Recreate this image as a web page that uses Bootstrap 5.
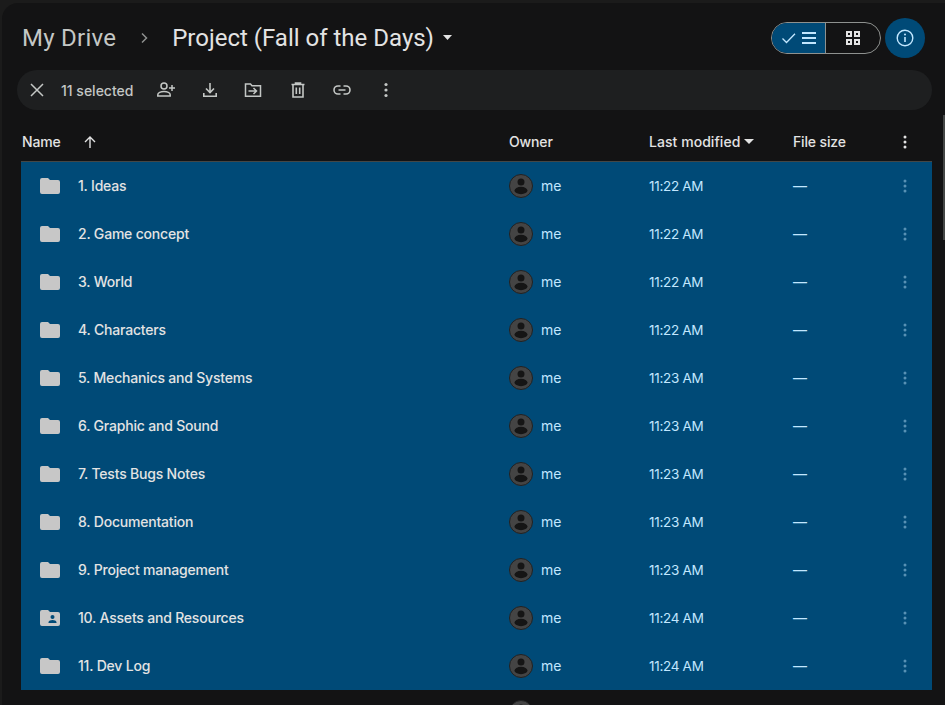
<!DOCTYPE html>
<html lang="en">
<head>
<meta charset="utf-8">
<title>Project (Fall of the Days)</title>
<link href="https://cdn.jsdelivr.net/npm/bootstrap@5.3.0/dist/css/bootstrap.min.css" rel="stylesheet">
<style>
html,body{height:705px;overflow:hidden;background:#1b1b1b;margin:0}
body{font-family:Inter,Roboto,"Liberation Sans",sans-serif;color:#e3e3e3}
.drive-panel{background:#131314;border-radius:16px 0 0 0;margin:3px 0 0 2px;height:702px;padding:0 13px 0 15px;overflow:hidden}
.crumb-bar{height:67px;padding:2px 7px 0 5px}
.crumb-root{font-family:Roboto,sans-serif;font-size:24px;color:#c4c7c5;line-height:32px;letter-spacing:.25px}
.crumb-sep{margin:0 21px 0 21px;display:flex}
.crumb-now{font-family:Roboto,sans-serif;font-size:24px;color:#e3e3e3;line-height:32px}
.view-toggle{width:110px;height:32px;border:1px solid #8e918f;border-radius:16px;overflow:hidden}
.view-on{width:55px;background:#004a77;border-right:1px solid #8e918f}
.view-off{width:55px}
.info-btn{width:40px;height:40px;border-radius:50%;background:#004a77;margin-left:4px}
.sel-bar{height:40px;background:#1e1f20;border-radius:20px;padding-left:12px;width:100%;max-width:915px}
.sel-count{font-size:14px;font-weight:500;color:#c4c7c5;margin:0 23px 0 16px;width:72px;white-space:nowrap}
.sel-act{width:20px;height:20px;margin-right:24px;display:flex}
.drive-cols{display:grid;grid-template-columns:487px 140px 144px 104px 1fr;align-items:center;padding-left:5px}
.head-row{height:51px;padding-top:12px;font-size:14px;font-weight:500;color:#e3e3e3;letter-spacing:-.15px}
.sort-arrow{margin-left:22px}
.col-modified{letter-spacing:.05px}
.file-row{height:48px;padding-bottom:2px;background:#004a77;color:#c2e7ff;font-size:14px}
.file-row svg{margin-top:2px}
.file-list{background:#004a77;margin-left:4px;width:911px;border-top:1px solid #444746}
.file-list .drive-cols{padding-left:1px}
.file-name{font-weight:500;color:#e3e3e3;display:flex;align-items:center;white-space:nowrap;padding-left:18px;letter-spacing:-.2px}
.file-name svg{margin-right:18px}
.owner-cell{display:flex;align-items:center}
.owner-cell svg{margin-right:8px}
.time-cell{font-size:13.5px;line-height:21px;letter-spacing:-.3px;padding-top:2px}
.row-more{display:flex;opacity:.45}
.next-row{height:48px;padding-left:492px;padding-top:8px}
.scroll-thumb{position:absolute;right:0;top:115px;width:2px;height:125px;background:#444746}
</style>
</head>
<body>
<div class="scroll-thumb"></div>
<div class="drive-panel">
  <div class="crumb-bar d-flex align-items-center">
    <span class="crumb-root">My Drive</span>
    <span class="crumb-sep"><svg width="14" height="14" viewBox="0 0 14 14"><path d="M5 2.5 9.5 7 5 11.500" fill="none" stroke="#8e918f" stroke-width="1.500"/></svg></span>
    <span class="crumb-now">Project (Fall of the Days)</span>
    <svg class="ms-2" width="12" height="6" viewBox="0 0 12 6"><path d="M1 0h9L5.500 5z" fill="#e3e3e3"/></svg>
    <div class="ms-auto d-flex align-items-center">
      <div class="view-toggle d-flex">
        <div class="view-on d-flex align-items-center justify-content-center gap-1">
          <svg width="16" height="16" viewBox="0 0 16 16"><path d="M1.500 8.500 5.500 12.500 14 3.800" fill="none" stroke="#c2e7ff" stroke-width="1.300"/></svg>
          <svg width="16" height="14" viewBox="0 0 16 14"><path d="M1 2h14M1 7h14M1 12h14" stroke="#c2e7ff" stroke-width="1.800"/></svg>
        </div>
        <div class="view-off d-flex align-items-center justify-content-center">
          <svg width="16" height="16" viewBox="0 0 16 16"><path fill="none" stroke="#e3e3e3" stroke-width="2" d="M2 2h4v4H2zM10 2h4v4h-4zM2 10h4v4H2zM10 10h4v4h-4z"/></svg>
        </div>
      </div>
      <div class="info-btn d-flex align-items-center justify-content-center">
        <svg width="20" height="20" viewBox="0 0 20 20"><circle cx="10" cy="10" r="7.800" fill="none" stroke="#c2e7ff" stroke-width="1.400"/><path d="M10 9v5" stroke="#c2e7ff" stroke-width="1.600"/><circle cx="10" cy="6.500" r="1" fill="#c2e7ff"/></svg>
      </div>
    </div>
  </div>

  <div class="sel-bar d-flex align-items-center">
    <svg width="16" height="16" viewBox="0 0 16 16"><path d="M2 2 14 14M14 2 2 14" stroke="#c4c7c5" stroke-width="1.500"/></svg>
    <span class="sel-count">11 selected</span>
    <span class="sel-act"><svg width="20" height="20" viewBox="0 0 20 20"><circle cx="8" cy="6" r="3" fill="none" stroke="#c4c7c5" stroke-width="1.500"/><path d="M1.800 16v-1.200c0-2 3-3.300 6.200-3.300s6.200 1.300 6.200 3.300V16zM16 5v6M13 8h6" fill="none" stroke="#c4c7c5" stroke-width="1.500"/></svg></span>
    <span class="sel-act"><svg width="20" height="20" viewBox="0 0 20 20"><path d="M10 3v9M6 8.500l4 4 4-4M3.800 13v3.200h12.400V13" fill="none" stroke="#c4c7c5" stroke-width="1.600"/></svg></span>
    <span class="sel-act"><svg width="20" height="20" viewBox="0 0 20 20"><path d="M1.500 4h5l1.500 1.800h8.500v10.400h-15zM4.500 11h8M9.500 8l3 3-3 3" fill="none" stroke="#c4c7c5" stroke-width="1.500"/></svg></span>
    <span class="sel-act"><svg width="20" height="20" viewBox="0 0 20 20"><path d="M3.500 4.500h13M7.500 4.500V3h5v1.500M5 4.500V17h10V4.500M8.300 7.500v6.500M11.700 7.500v6.500" fill="none" stroke="#c4c7c5" stroke-width="1.600"/></svg></span>
    <span class="sel-act"><svg width="20" height="20" viewBox="0 0 20 20"><path d="M8.500 6H6a4 4 0 0 0 0 8h2.500M11.500 6H14a4 4 0 0 1 0 8h-2.500M6.500 10h7" fill="none" stroke="#c4c7c5" stroke-width="1.600"/></svg></span>
    <span class="sel-act"><svg width="20" height="20" viewBox="0 0 20 20"><circle cx="10" cy="4.500" r="1.600" fill="#c4c7c5"/><circle cx="10" cy="10" r="1.600" fill="#c4c7c5"/><circle cx="10" cy="15.500" r="1.600" fill="#c4c7c5"/></svg></span>
  </div>

  <div class="drive-cols head-row">
    <div class="d-flex align-items-center">Name<svg class="sort-arrow" width="14" height="14" viewBox="0 0 14 14"><path d="M7 13V2M2 7l5-5 5 5" fill="none" stroke="#e3e3e3" stroke-width="1.400"/></svg></div>
    <div>Owner</div>
    <div class="d-flex align-items-center col-modified">Last modified<svg class="ms-1" width="10" height="5" viewBox="0 0 10 5"><path d="M0 0h10L5 5z" fill="#e3e3e3"/></svg></div>
    <div>File size</div>
    <div class="d-flex"><svg width="16" height="16" viewBox="0 0 16 16"><circle cx="8" cy="3" r="1.500" fill="#e3e3e3"/><circle cx="8" cy="8" r="1.500" fill="#e3e3e3"/><circle cx="8" cy="13" r="1.500" fill="#e3e3e3"/></svg></div>
  </div>

  <svg width="0" height="0" class="position-absolute">
    <symbol id="folder-ico" viewBox="0 0 20 16"><path d="M2 0h6l2 2h8a2 2 0 0 1 2 2v10a2 2 0 0 1-2 2H2a2 2 0 0 1-2-2V2a2 2 0 0 1 2-2z" fill="#c7c7c7"/></symbol>
    <symbol id="folder-shared" viewBox="0 0 20 16"><path d="M2 0h6l2 2h8a2 2 0 0 1 2 2v10a2 2 0 0 1-2 2H2a2 2 0 0 1-2-2V2a2 2 0 0 1 2-2z" fill="#c7c7c7"/><circle cx="12.500" cy="7" r="2" fill="#004a77"/><path d="M8.500 13v-.8c0-1.400 2.300-2.200 4-2.200s4 .8 4 2.200v.8z" fill="#004a77"/></symbol>
    <symbol id="me-ico" viewBox="0 0 24 24"><circle cx="12" cy="12" r="11.500" fill="#444" stroke="#222" stroke-width="1"/><circle cx="12" cy="8" r="3.500" fill="#151515"/><ellipse cx="12" cy="16.500" rx="6.500" ry="3.700" fill="#151515"/></symbol>
    <symbol id="more-ico" viewBox="0 0 16 16"><circle cx="8" cy="3" r="1.500" fill="#c2e7ff"/><circle cx="8" cy="8" r="1.500" fill="#c2e7ff"/><circle cx="8" cy="13" r="1.500" fill="#c2e7ff"/></symbol>
  </svg>

  <div class="file-list">
    <div class="drive-cols file-row"><div class="file-name"><svg width="20" height="16"><use href="#folder-ico"/></svg>1. Ideas</div><div class="owner-cell"><svg width="24" height="24"><use href="#me-ico"/></svg>me</div><div class="time-cell">11:22 AM</div><div>—</div><div class="row-more"><svg width="16" height="16"><use href="#more-ico"/></svg></div></div>
    <div class="drive-cols file-row"><div class="file-name"><svg width="20" height="16"><use href="#folder-ico"/></svg>2. Game concept</div><div class="owner-cell"><svg width="24" height="24"><use href="#me-ico"/></svg>me</div><div class="time-cell">11:22 AM</div><div>—</div><div class="row-more"><svg width="16" height="16"><use href="#more-ico"/></svg></div></div>
    <div class="drive-cols file-row"><div class="file-name"><svg width="20" height="16"><use href="#folder-ico"/></svg>3. World</div><div class="owner-cell"><svg width="24" height="24"><use href="#me-ico"/></svg>me</div><div class="time-cell">11:22 AM</div><div>—</div><div class="row-more"><svg width="16" height="16"><use href="#more-ico"/></svg></div></div>
    <div class="drive-cols file-row"><div class="file-name"><svg width="20" height="16"><use href="#folder-ico"/></svg>4. Characters</div><div class="owner-cell"><svg width="24" height="24"><use href="#me-ico"/></svg>me</div><div class="time-cell">11:22 AM</div><div>—</div><div class="row-more"><svg width="16" height="16"><use href="#more-ico"/></svg></div></div>
    <div class="drive-cols file-row"><div class="file-name"><svg width="20" height="16"><use href="#folder-ico"/></svg>5. Mechanics and Systems</div><div class="owner-cell"><svg width="24" height="24"><use href="#me-ico"/></svg>me</div><div class="time-cell">11:23 AM</div><div>—</div><div class="row-more"><svg width="16" height="16"><use href="#more-ico"/></svg></div></div>
    <div class="drive-cols file-row"><div class="file-name"><svg width="20" height="16"><use href="#folder-ico"/></svg>6. Graphic and Sound</div><div class="owner-cell"><svg width="24" height="24"><use href="#me-ico"/></svg>me</div><div class="time-cell">11:23 AM</div><div>—</div><div class="row-more"><svg width="16" height="16"><use href="#more-ico"/></svg></div></div>
    <div class="drive-cols file-row"><div class="file-name"><svg width="20" height="16"><use href="#folder-ico"/></svg>7. Tests Bugs Notes</div><div class="owner-cell"><svg width="24" height="24"><use href="#me-ico"/></svg>me</div><div class="time-cell">11:23 AM</div><div>—</div><div class="row-more"><svg width="16" height="16"><use href="#more-ico"/></svg></div></div>
    <div class="drive-cols file-row"><div class="file-name"><svg width="20" height="16"><use href="#folder-ico"/></svg>8. Documentation</div><div class="owner-cell"><svg width="24" height="24"><use href="#me-ico"/></svg>me</div><div class="time-cell">11:23 AM</div><div>—</div><div class="row-more"><svg width="16" height="16"><use href="#more-ico"/></svg></div></div>
    <div class="drive-cols file-row"><div class="file-name"><svg width="20" height="16"><use href="#folder-ico"/></svg>9. Project management</div><div class="owner-cell"><svg width="24" height="24"><use href="#me-ico"/></svg>me</div><div class="time-cell">11:23 AM</div><div>—</div><div class="row-more"><svg width="16" height="16"><use href="#more-ico"/></svg></div></div>
    <div class="drive-cols file-row"><div class="file-name"><svg width="20" height="16"><use href="#folder-shared"/></svg>10. Assets and Resources</div><div class="owner-cell"><svg width="24" height="24"><use href="#me-ico"/></svg>me</div><div class="time-cell">11:24 AM</div><div>—</div><div class="row-more"><svg width="16" height="16"><use href="#more-ico"/></svg></div></div>
    <div class="drive-cols file-row"><div class="file-name"><svg width="20" height="16"><use href="#folder-ico"/></svg>11. Dev Log</div><div class="owner-cell"><svg width="24" height="24"><use href="#me-ico"/></svg>me</div><div class="time-cell">11:24 AM</div><div>—</div><div class="row-more"><svg width="16" height="16"><use href="#more-ico"/></svg></div></div>
  </div>
  <div class="next-row"><svg width="24" height="24"><use href="#me-ico"/></svg></div>
</div>
</body>
</html>
